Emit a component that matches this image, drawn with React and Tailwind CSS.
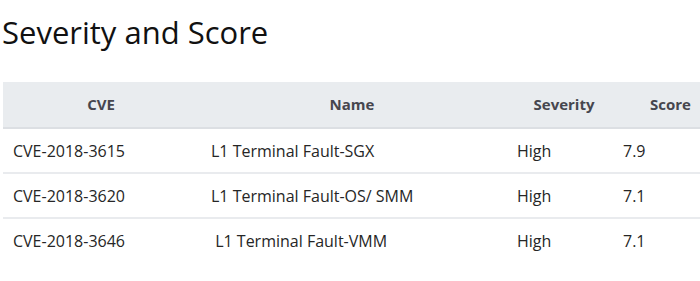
import React from 'react';

const rows = [
  { cve: 'CVE-2018-3615', name: 'L1 Terminal Fault-SGX', sev: 'High', score: '7.9' },
  { cve: 'CVE-2018-3620', name: 'L1 Terminal Fault-OS/ SMM', sev: 'High', score: '7.1' },
  { cve: 'CVE-2018-3646', name: '\u00a0L1 Terminal Fault-VMM', sev: 'High', score: '7.1' },
];

export default function App() {
  return (
    <div className="w-[700px] h-[281px] overflow-hidden bg-white text-[#262626] font-['Open_Sans',sans-serif]">
      <h2 className="pl-[2px] pt-[12px] text-[31px] leading-[40px] text-[#111]">Severity and Score</h2>

      <table className="mt-[30px] ml-[3px] w-[740px] table-fixed border-collapse text-[16px]">
        <colgroup>
          <col className="w-[196px]" />
          <col className="w-[306px]" />
          <col className="w-[118px]" />
          <col className="w-[120px]" />
        </colgroup>
        <thead>
          <tr className="h-[46px] bg-[#e9ecef] border-b-2 border-[#dcdfe3] text-[#46464e] text-[15px]">
            <th className="font-bold text-center">CVE</th>
            <th className="font-bold text-center">Name</th>
            <th className="font-bold text-center">Severity</th>
            <th className="font-bold text-left pl-[27px]">Score</th>
          </tr>
        </thead>
        <tbody>
          {rows.map((r, i) => (
            <tr key={r.cve} className={`h-[45px] ${i < rows.length - 1 ? 'border-b-2 border-[#e9ebee]' : ''}`}>
              <td className="pl-[10px]">{r.cve}</td>
              <td className="pl-[12px]">{r.name}</td>
              <td className="pl-[12px]">{r.sev}</td>
              <td className="pl-0">{r.score}</td>
            </tr>
          ))}
        </tbody>
      </table>
    </div>
  );
}
